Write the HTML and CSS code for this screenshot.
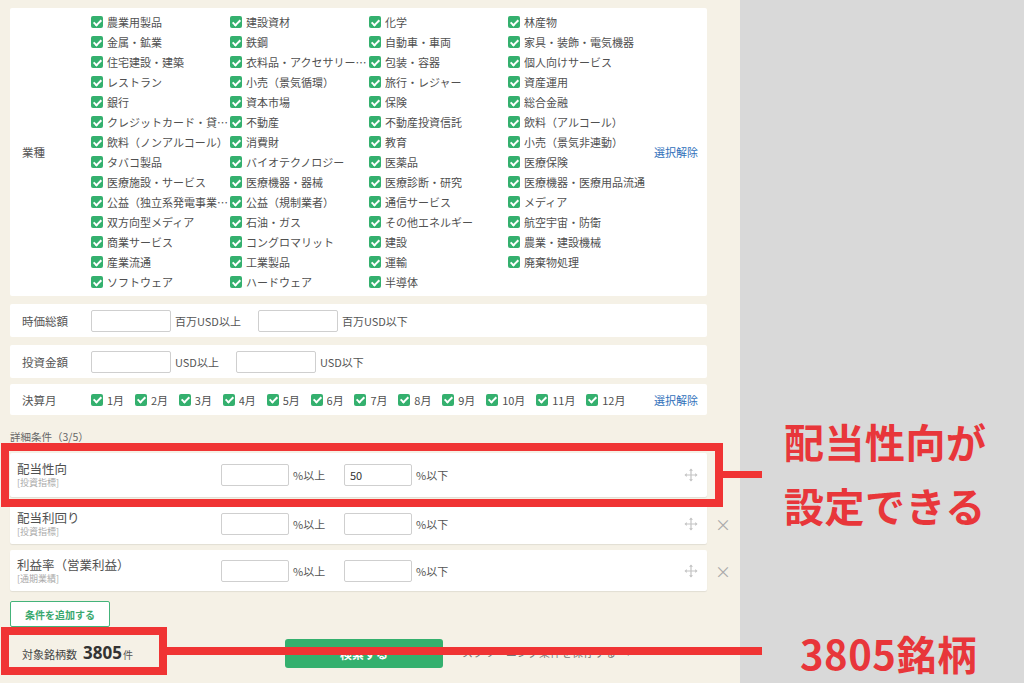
FILE: index.html
```html
<!DOCTYPE html>
<html lang="ja">
<head>
<meta charset="utf-8">
<title>スクリーニング</title>
<link rel="stylesheet" href="styles.css">
</head>
<body>
<div class="page">
  <div class="panel">
    <section class="card industry">
      <div class="label">業種</div>
      <div class="grid4">
        <label class="item"><span class="cb"></span><span class="t">農業用製品</span></label>
        <label class="item"><span class="cb"></span><span class="t">建設資材</span></label>
        <label class="item"><span class="cb"></span><span class="t">化学</span></label>
        <label class="item"><span class="cb"></span><span class="t">林産物</span></label>
        <label class="item"><span class="cb"></span><span class="t">金属・鉱業</span></label>
        <label class="item"><span class="cb"></span><span class="t">鉄鋼</span></label>
        <label class="item"><span class="cb"></span><span class="t">自動車・車両</span></label>
        <label class="item"><span class="cb"></span><span class="t">家具・装飾・電気機器</span></label>
        <label class="item"><span class="cb"></span><span class="t">住宅建設・建築</span></label>
        <label class="item"><span class="cb"></span><span class="t">衣料品・アクセサリー…</span></label>
        <label class="item"><span class="cb"></span><span class="t">包装・容器</span></label>
        <label class="item"><span class="cb"></span><span class="t">個人向けサービス</span></label>
        <label class="item"><span class="cb"></span><span class="t">レストラン</span></label>
        <label class="item"><span class="cb"></span><span class="t">小売（景気循環）</span></label>
        <label class="item"><span class="cb"></span><span class="t">旅行・レジャー</span></label>
        <label class="item"><span class="cb"></span><span class="t">資産運用</span></label>
        <label class="item"><span class="cb"></span><span class="t">銀行</span></label>
        <label class="item"><span class="cb"></span><span class="t">資本市場</span></label>
        <label class="item"><span class="cb"></span><span class="t">保険</span></label>
        <label class="item"><span class="cb"></span><span class="t">総合金融</span></label>
        <label class="item"><span class="cb"></span><span class="t">クレジットカード・貸…</span></label>
        <label class="item"><span class="cb"></span><span class="t">不動産</span></label>
        <label class="item"><span class="cb"></span><span class="t">不動産投資信託</span></label>
        <label class="item"><span class="cb"></span><span class="t">飲料（アルコール）</span></label>
        <label class="item"><span class="cb"></span><span class="t">飲料（ノンアルコール）</span></label>
        <label class="item"><span class="cb"></span><span class="t">消費財</span></label>
        <label class="item"><span class="cb"></span><span class="t">教育</span></label>
        <label class="item"><span class="cb"></span><span class="t">小売（景気非連動）</span></label>
        <label class="item"><span class="cb"></span><span class="t">タバコ製品</span></label>
        <label class="item"><span class="cb"></span><span class="t">バイオテクノロジー</span></label>
        <label class="item"><span class="cb"></span><span class="t">医薬品</span></label>
        <label class="item"><span class="cb"></span><span class="t">医療保険</span></label>
        <label class="item"><span class="cb"></span><span class="t">医療施設・サービス</span></label>
        <label class="item"><span class="cb"></span><span class="t">医療機器・器械</span></label>
        <label class="item"><span class="cb"></span><span class="t">医療診断・研究</span></label>
        <label class="item"><span class="cb"></span><span class="t">医療機器・医療用品流通</span></label>
        <label class="item"><span class="cb"></span><span class="t">公益（独立系発電事業…</span></label>
        <label class="item"><span class="cb"></span><span class="t">公益（規制業者）</span></label>
        <label class="item"><span class="cb"></span><span class="t">通信サービス</span></label>
        <label class="item"><span class="cb"></span><span class="t">メディア</span></label>
        <label class="item"><span class="cb"></span><span class="t">双方向型メディア</span></label>
        <label class="item"><span class="cb"></span><span class="t">石油・ガス</span></label>
        <label class="item"><span class="cb"></span><span class="t">その他エネルギー</span></label>
        <label class="item"><span class="cb"></span><span class="t">航空宇宙・防衛</span></label>
        <label class="item"><span class="cb"></span><span class="t">商業サービス</span></label>
        <label class="item"><span class="cb"></span><span class="t">コングロマリット</span></label>
        <label class="item"><span class="cb"></span><span class="t">建設</span></label>
        <label class="item"><span class="cb"></span><span class="t">農業・建設機械</span></label>
        <label class="item"><span class="cb"></span><span class="t">産業流通</span></label>
        <label class="item"><span class="cb"></span><span class="t">工業製品</span></label>
        <label class="item"><span class="cb"></span><span class="t">運輸</span></label>
        <label class="item"><span class="cb"></span><span class="t">廃棄物処理</span></label>
        <label class="item"><span class="cb"></span><span class="t">ソフトウェア</span></label>
        <label class="item"><span class="cb"></span><span class="t">ハードウェア</span></label>
        <label class="item"><span class="cb"></span><span class="t">半導体</span></label>
      </div>
      <a class="clear">選択解除</a>
    </section>

    <section class="card line cap">
      <div class="label">時価総額</div>
      <span class="inp"></span><span class="unit">百万USD以上</span>
      <span class="inp"></span><span class="unit">百万USD以下</span>
    </section>

    <section class="card line invest">
      <div class="label">投資金額</div>
      <span class="inp"></span><span class="unit">USD以上</span>
      <span class="inp"></span><span class="unit">USD以下</span>
    </section>

    <section class="card line month">
      <div class="label">決算月</div>
      <div class="months">
        <label class="item"><span class="cb"></span><span class="t">1月</span></label>
        <label class="item"><span class="cb"></span><span class="t">2月</span></label>
        <label class="item"><span class="cb"></span><span class="t">3月</span></label>
        <label class="item"><span class="cb"></span><span class="t">4月</span></label>
        <label class="item"><span class="cb"></span><span class="t">5月</span></label>
        <label class="item"><span class="cb"></span><span class="t">6月</span></label>
        <label class="item"><span class="cb"></span><span class="t">7月</span></label>
        <label class="item"><span class="cb"></span><span class="t">8月</span></label>
        <label class="item"><span class="cb"></span><span class="t">9月</span></label>
        <label class="item"><span class="cb"></span><span class="t">10月</span></label>
        <label class="item"><span class="cb"></span><span class="t">11月</span></label>
        <label class="item"><span class="cb"></span><span class="t">12月</span></label>
      </div>
      <a class="clear">選択解除</a>
    </section>

    <div class="subhead">詳細条件（3/5）</div>

    <div class="conds">
      <div class="cond-row first">
        <div class="card cond">
          <div class="ctitle"><div class="cname">配当性向</div><div class="ctag">[投資指標]</div></div>
          <span class="inp sm"></span><span class="unit p">%以上</span>
          <span class="inp sm">50</span><span class="unit p">%以下</span>
          <svg class="drag" viewBox="0 0 14 14" width="14" height="14"><path d="M7 1.5v11M1.5 7h11" stroke="#c4c4c4" stroke-width="1.2" fill="none"/><path d="M7 0.5l-2 2.2h4zM7 13.5l-2-2.2h4zM0.5 7l2.2-2v4zM13.5 7l-2.2-2v4z" fill="#c4c4c4"/></svg>
        </div>
      </div>
      <div class="cond-row">
        <div class="card cond">
          <div class="ctitle"><div class="cname">配当利回り</div><div class="ctag">[投資指標]</div></div>
          <span class="inp sm"></span><span class="unit p">%以上</span>
          <span class="inp sm"></span><span class="unit p">%以下</span>
          <svg class="drag" viewBox="0 0 14 14" width="14" height="14"><path d="M7 1.5v11M1.5 7h11" stroke="#c4c4c4" stroke-width="1.2" fill="none"/><path d="M7 0.5l-2 2.2h4zM7 13.5l-2-2.2h4zM0.5 7l2.2-2v4zM13.5 7l-2.2-2v4z" fill="#c4c4c4"/></svg>
        </div>
        <span class="del">×</span>
      </div>
      <div class="cond-row">
        <div class="card cond">
          <div class="ctitle"><div class="cname">利益率（営業利益）</div><div class="ctag">[通期業績]</div></div>
          <span class="inp sm"></span><span class="unit p">%以上</span>
          <span class="inp sm"></span><span class="unit p">%以下</span>
          <svg class="drag" viewBox="0 0 14 14" width="14" height="14"><path d="M7 1.5v11M1.5 7h11" stroke="#c4c4c4" stroke-width="1.2" fill="none"/><path d="M7 0.5l-2 2.2h4zM7 13.5l-2-2.2h4zM0.5 7l2.2-2v4zM13.5 7l-2.2-2v4z" fill="#c4c4c4"/></svg>
        </div>
        <span class="del">×</span>
      </div>
    </div>

    <button class="add">条件を追加する</button>

    <div class="bottom">
      <div class="count"><span class="clabel">対象銘柄数</span><span class="num">3805</span><span class="ken">件</span></div>
      <button class="search">検索する</button>
      <a class="save">スクリーニング条件を保存する　›</a>
    </div>
  </div>
  <div class="side"></div>

  <div class="mark box1"></div>
  <div class="mark link1"></div>
  <div class="mark box2"></div>
  <div class="mark link2"></div>
  <div class="note note1">配当性向が<br>設定できる</div>
  <div class="note note2">3805銘柄</div>
</div>
</body>
</html>
```

FILE: styles.css
```css
* { box-sizing: border-box; }
html, body { margin: 0; padding: 0; }
body {
  background: #d9d9d9;
  font-family: "Noto Sans CJK JP", "Noto Sans", sans-serif;
  color: #555;
  font-size: 11px;
}
.page {
  position: relative;
  width: 1024px;
  height: 683px;
  overflow: hidden;
  display: flex;
}
.panel {
  width: 740px;
  height: 683px;
  background: #f5f1e6;
  padding: 8px 0 0 10px;
  display: flex;
  flex-direction: column;
}
.side { flex: 1; background: #d9d9d9; }

.card {
  background: #fff;
  width: 697px;
  border-radius: 2px;
}
.label {
  width: 81px;
  padding-left: 12px;
  font-size: 11.5px;
  color: #555;
  flex: none;
}

/* industry */
.industry {
  height: 288px;
  display: flex;
  align-items: center;
  margin-bottom: 8px;
}
.grid4 {
  display: grid;
  grid-template-columns: repeat(4, 139px);
  grid-auto-rows: 20px;
  width: 556px;
}
.item {
  display: flex;
  align-items: center;
  gap: 4px;
  white-space: nowrap;
  overflow: hidden;
  color: #505050;
}
.cb {
  position: relative;
  flex: none;
  width: 12px;
  height: 12px;
  border-radius: 2px;
  background: #34b06e;
}
.cb::after {
  content: "";
  position: absolute;
  left: 4px;
  top: 1.5px;
  width: 3px;
  height: 6px;
  border: solid #fff;
  border-width: 0 2px 2px 0;
  transform: rotate(45deg);
}
.t { overflow: hidden; text-overflow: ellipsis; }
.clear {
  color: #2f6fba;
  font-size: 11px;
  margin-left: 7px;
}

/* line rows */
.line {
  display: flex;
  align-items: center;
  height: 33px;
}
.cap { margin-bottom: 8px; }
.invest { margin-bottom: 6px; }
.month { height: 31px; }
.inp {
  width: 80px;
  height: 22px;
  border: 1px solid #cfcfcf;
  border-radius: 2px;
  background: #fff;
  flex: none;
  font-size: 11px;
  color: #333;
  padding-left: 5px;
  line-height: 20px;
}
.unit {
  margin-left: 4px;
  margin-right: 17px;
  color: #555;
}
.months {
  display: flex;
  gap: 10.8px;
  width: 556px;
}
.months .item { overflow: visible; }
.month .clear { margin-left: 7px; }

.subhead {
  margin-top: 14px;
  line-height: 16px;
  height: 16px;
  font-size: 10.5px;
  color: #666;
  margin-bottom: 8px;
}

/* conditions */
.conds { display: flex; flex-direction: column; gap: 6px; }
.cond-row { display: flex; align-items: center; }
.cond-row:nth-child(1) .cond { height: 44px; }
.cond {
  height: 41px;
  display: flex;
  align-items: center;
  padding-right: 9px;
  box-shadow: 0 1px 1px rgba(0,0,0,0.08);
}
.ctitle {
  width: 211px;
  padding-left: 7px;
  align-self: center;
}
.cname { font-size: 12.5px; color: #505050; line-height: 15px; }
.ctag { font-size: 9px; color: #aaa; line-height: 13px; }
.inp.sm { width: 68px; }
.unit.p { width: 51px; margin-right: 0; margin-left: 4px; }
.drag { margin-left: auto; flex: none; }
.del {
  margin-left: 8px;
  color: #aaa;
  font-size: 16px;
  line-height: 16px;
}

.add {
  margin-top: 10px;
  width: 100px;
  height: 26px;
  background: #fff;
  border: 1px solid #44b37a;
  border-radius: 2px;
  color: #3aa86e;
  font-family: inherit;
  font-size: 10px;
  font-weight: bold;
  padding: 0;
}

.bottom {
  height: 50px;
  display: flex;
  align-items: center;
}
.count {
  width: 275px;
  padding-left: 12px;
  display: flex;
  align-items: baseline;
}
.clabel { font-size: 11px; color: #444; margin-right: 6px; }
.num { font-size: 17px; font-weight: bold; color: #333; font-family: "Open Sans", "Noto Sans", sans-serif; }
.ken { font-size: 10px; color: #555; margin-left: 1px; }
.search {
  width: 158px;
  height: 29px;
  background: #34b06e;
  border: none;
  border-radius: 3px;
  color: #fff;
  font-family: inherit;
  font-size: 12px;
  font-weight: bold;
  margin-top: 2px;
}
.save {
  margin-left: 19px;
  color: #777;
  font-size: 11px;
}

/* annotation overlays */
.mark { position: absolute; }
.box1 {
  left: 1px; top: 443px;
  width: 722px; height: 64px;
  border: 8px solid #f03434;
}
.link1 {
  left: 723px; top: 471px;
  width: 39px; height: 7px;
  background: #f03434;
}
.box2 {
  left: 1px; top: 627px;
  width: 166px; height: 48px;
  border: 8px solid #f03434;
}
.link2 {
  left: 167px; top: 647px;
  width: 595px; height: 8px;
  background: #f03434;
}
.note {
  position: absolute;
  color: #e8363a;
  font-weight: bold;
  font-family: "Noto Sans CJK JP", sans-serif;
  font-size: 40px;
  letter-spacing: 0.5px;
}
.note1 {
  left: 784px; top: 409px;
  line-height: 64px;
}
.note2 {
  left: 800px; top: 628px;
  line-height: 50px;
}
```
